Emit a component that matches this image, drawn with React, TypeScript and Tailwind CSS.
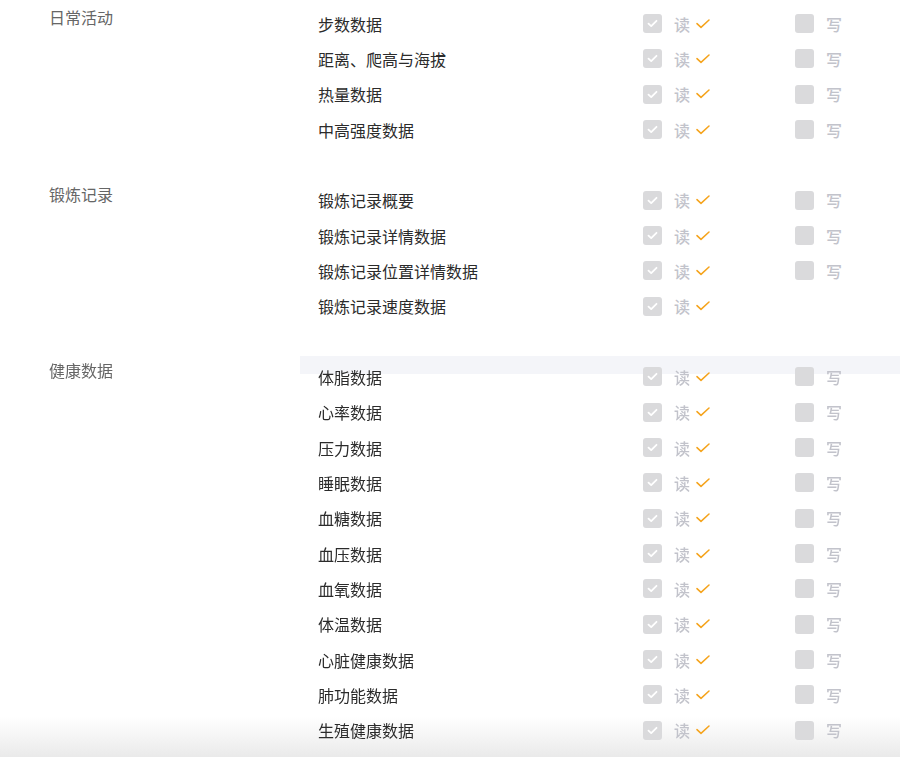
import React from 'react'

type Section = {
    title: string;
    items: { name: string; write: boolean }[];
}

const sections: Section[] = [
    {
        title: '日常活动',
        items: [
            { name: '步数数据', write: true },
            { name: '距离、爬高与海拔', write: true },
            { name: '热量数据', write: true },
            { name: '中高强度数据', write: true },
        ],
    },
    {
        title: '锻炼记录',
        items: [
            { name: '锻炼记录概要', write: true },
            { name: '锻炼记录详情数据', write: true },
            { name: '锻炼记录位置详情数据', write: true },
            { name: '锻炼记录速度数据', write: false },
        ],
    },
    {
        title: '健康数据',
        items: [
            { name: '体脂数据', write: true },
            { name: '心率数据', write: true },
            { name: '压力数据', write: true },
            { name: '睡眠数据', write: true },
            { name: '血糖数据', write: true },
            { name: '血压数据', write: true },
            { name: '血氧数据', write: true },
            { name: '体温数据', write: true },
            { name: '心脏健康数据', write: true },
            { name: '肺功能数据', write: true },
            { name: '生殖健康数据', write: true },
        ],
    },
]

const Box = ({ checked }: { checked: boolean }) => (
    <div className="w-[19px] h-[19px] rounded-[3px] bg-[#dadadc] flex items-center justify-center shrink-0">
        {checked && (
            <svg width="11" height="9" viewBox="0 0 11 9" fill="none">
                <path d="M1.5 4.6 L4.2 7.1 L9.5 1.8" stroke="#fff" strokeWidth="1.8" strokeLinecap="round" strokeLinejoin="round" />
            </svg>
        )}
    </div>
)

const App = () => {
    return (
        <div className="relative min-h-screen bg-white pt-[6px] pl-[49px] text-[16px]" style={{ fontFamily: '"Noto Sans CJK SC", "Noto Sans", sans-serif' }}>
            {/* bottom shade sits behind the list */}
            <div className="fixed left-0 right-0 bottom-0 h-[40px] pointer-events-none bg-gradient-to-b from-white to-[#eaeaea]" />
            {sections.map((section, si) => (
                <div key={section.title} className={si > 0 ? 'relative flex mt-[35.33px]' : 'relative flex'}>
                    <div className="w-[269px] shrink-0 text-[#666666] leading-[23px]">
                        {section.title}
                    </div>
                    <div className="flex flex-col">
                        {section.items.map((item, i) => (
                            <div key={item.name} className="relative flex items-center h-[35.33px]">
                                {si === 2 && i === 0 && (
                                    <div className="absolute left-[-18px] w-[600px] top-[-3px] h-[18px] bg-[#f4f5f9]" />
                                )}
                                <div className="relative w-[325px] text-[#2b2b2b]">{item.name}</div>
                                <div className="relative flex items-center w-[152px]">
                                    <Box checked />
                                    <span className="ml-[12px] font-medium text-[#c2c3cb]">读</span>
                                    <svg className="ml-[6px]" width="14" height="10" viewBox="0 0 14 10" fill="none">
                                        <path d="M1 4.6 L5 8.4 L13 1" stroke="#f5a31b" strokeWidth="1.5" strokeLinecap="round" strokeLinejoin="round" />
                                    </svg>
                                </div>
                                {item.write && (
                                    <div className="relative flex items-center">
                                        <Box checked={false} />
                                        <span className="ml-[12px] font-medium text-[#c2c3cb]">写</span>
                                    </div>
                                )}
                            </div>
                        ))}
                    </div>
                </div>
            ))}
        </div>
    )
}

export default App
